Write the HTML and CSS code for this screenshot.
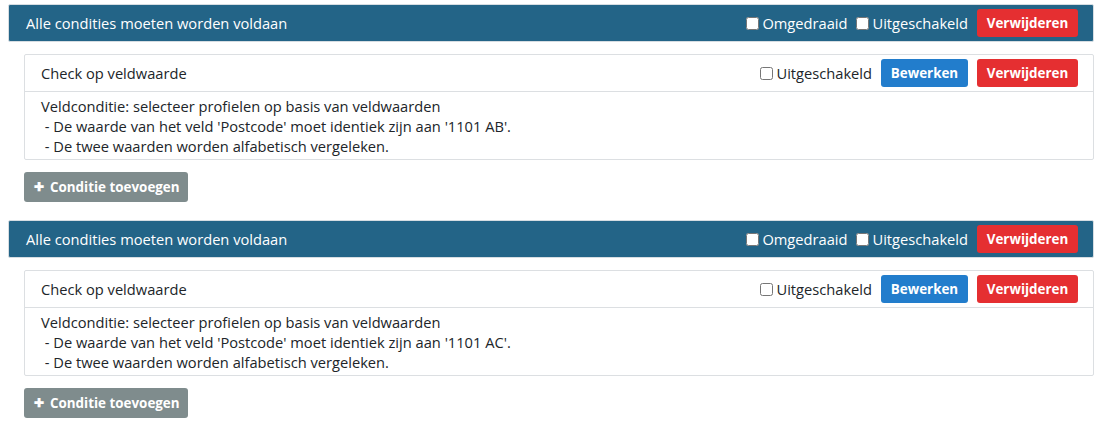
FILE: index.html
```html
<!DOCTYPE html>
<html lang="nl">
<head>
<meta charset="utf-8">
<title>Condities</title>
<link rel="stylesheet" href="styles.css">
</head>
<body>
<div class="group">
  <div class="group-header">
    <span class="group-title">Alle condities moeten worden voldaan</span>
    <div class="actions">
      <label class="check"><input type="checkbox">Omgedraaid</label>
      <label class="check"><input type="checkbox">Uitgeschakeld</label>
      <button class="btn btn-red">Verwijderen</button>
    </div>
  </div>
  <div class="group-body">
    <div class="card">
      <div class="card-header">
        <span class="card-title">Check op veldwaarde</span>
        <div class="actions">
          <label class="check dark"><input type="checkbox">Uitgeschakeld</label>
          <button class="btn btn-blue">Bewerken</button>
          <button class="btn btn-red">Verwijderen</button>
        </div>
      </div>
      <div class="card-body">Veldconditie: selecteer profielen op basis van veldwaarden
 - De waarde van het veld 'Postcode' moet identiek zijn aan '1101 AB'.
 - De twee waarden worden alfabetisch vergeleken.</div>
    </div>
    <button class="btn btn-grey add"><span class="plus">✚</span>Conditie toevoegen</button>
  </div>
</div>
<div class="group">
  <div class="group-header">
    <span class="group-title">Alle condities moeten worden voldaan</span>
    <div class="actions">
      <label class="check"><input type="checkbox">Omgedraaid</label>
      <label class="check"><input type="checkbox">Uitgeschakeld</label>
      <button class="btn btn-red">Verwijderen</button>
    </div>
  </div>
  <div class="group-body">
    <div class="card">
      <div class="card-header">
        <span class="card-title">Check op veldwaarde</span>
        <div class="actions">
          <label class="check dark"><input type="checkbox">Uitgeschakeld</label>
          <button class="btn btn-blue">Bewerken</button>
          <button class="btn btn-red">Verwijderen</button>
        </div>
      </div>
      <div class="card-body">Veldconditie: selecteer profielen op basis van veldwaarden
 - De waarde van het veld 'Postcode' moet identiek zijn aan '1101 AC'.
 - De twee waarden worden alfabetisch vergeleken.</div>
    </div>
    <button class="btn btn-grey add"><span class="plus">✚</span>Conditie toevoegen</button>
  </div>
</div>
</body>
</html>
```

FILE: styles.css
```css
* { box-sizing: border-box; }
body {
  margin: 4px 8px;
  font-family: "Open Sans", "Liberation Sans", sans-serif;
  font-size: 14.667px;
  color: #212529;
  background: #fff;
}
.group { margin-bottom: 18px; }
.group-header {
  display: flex;
  align-items: center;
  justify-content: space-between;
  background: #236487;
  border: 1px solid #d6dde2;
  border-radius: 2px;
  padding: 4px 15px 4px 17px;
  color: #fff;
  height: 38px;
}
.group-title { line-height: 20px; }
.actions {
  display: flex;
  align-items: center;
}
.check {
  display: flex;
  align-items: center;
  margin-right: 9px;
  line-height: 20px;
  cursor: pointer;
}
.check input {
  margin: 0 3px 0 0;
  width: 13px;
  height: 13px;
}
.group-body { padding: 12px 0 0 16px; }
.card {
  border: 1px solid #dcdfe2;
  border-radius: 2px;
}
.card-header {
  display: flex;
  align-items: center;
  justify-content: space-between;
  padding: 4px 15px 4px 16px;
  border-bottom: 1px solid #dcdfe2;
  height: 37px;
}
.card-body {
  padding: 4px 16px 3px 16px;
  line-height: 20px;
  white-space: pre-wrap;
}
.btn {
  font-family: "Open Sans", "Liberation Sans", sans-serif;
  font-size: 13.4px;
  font-weight: 700;
  color: #fff;
  border: none;
  border-radius: 3px;
  height: 28px;
  padding: 0;
  cursor: pointer;
  line-height: 28px;
}
.btn-red { background: #e52f31; width: 101px; }
.btn-blue { background: #227dcc; width: 87px; margin-right: 9px; }
.btn-grey { background: #7f8c8d; }
.add {
  margin-top: 12px;
  height: 30px;
  width: 164px;
  padding: 0 0 0 10px;
  display: flex;
  align-items: center;
}
.plus { font-size: 12px; margin-right: 6px; }
```
